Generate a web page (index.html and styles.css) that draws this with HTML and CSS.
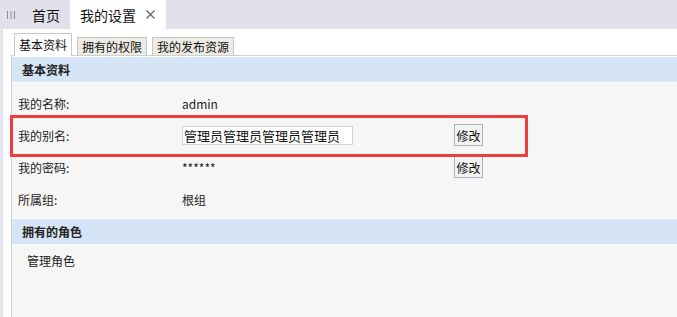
FILE: index.html
```html
<!DOCTYPE html>
<html lang="zh-CN">
<head>
  <meta charset="UTF-8" />
  <title>我的设置</title>
  <link rel="stylesheet" href="styles.css">
</head>
<body>
  <!-- Top tab bar -->
  <div class="topbar">
    <div class="handle">
      <svg width="10" height="8" viewBox="0 0 10 8">
        <path d="M1.5 0V8M5 0V8M8.5 0V8" stroke="#8a8a96" stroke-width="1" />
      </svg>
    </div>
    <div class="page-tab">首页</div>
    <div class="page-tab active">
      <span>我的设置</span>
      <svg class="close" width="9" height="9" viewBox="0 0 9 9">
        <path d="M0.5 0.5L8.5 8.5M8.5 0.5L0.5 8.5" stroke="#666" stroke-width="1.3" />
      </svg>
    </div>
  </div>

  <div class="main">
    <div class="gutter"></div>
    <div class="panel">
      <!-- Inner tabs -->
      <div class="sub-tabs">
        <div class="sub-tab selected">基本资料</div>
        <div class="sub-tab">拥有的权限</div>
        <div class="sub-tab">我的发布资源</div>
      </div>

      <div class="content">
        <div class="section-head">基本资料</div>
        <div class="rows">
          <div class="row">
            <div class="label">我的名称:</div>
            <div class="value">admin</div>
          </div>
          <div class="row">
            <div class="label">我的别名:</div>
            <div class="value"><input class="text-input" type="text" value="管理员管理员管理员管理员"></div>
            <button class="btn">修改</button>
          </div>
          <div class="row">
            <div class="label">我的密码:</div>
            <div class="value">******</div>
            <button class="btn">修改</button>
          </div>
          <div class="row">
            <div class="label">所属组:</div>
            <div class="value">根组</div>
          </div>
        </div>

        <div class="section-head">拥有的角色</div>
        <div class="roles">
          <div class="role">管理角色</div>
        </div>
      </div>
    </div>
  </div>

  <!-- Highlight annotation -->
  <div class="highlight"></div>
</body>
</html>
```

FILE: styles.css
```css
:root {
  --bar-bg: #e1e0eb;
  --panel-bg: #f6f6f6;
  --head-bg: #d5e5f5;
  --text: #222;
  --line: #d2cec9;
}

html, body {
  margin: 0;
  height: 100%;
}

body {
  font-family: "Noto Sans CJK SC", "Noto Sans", sans-serif;
  font-size: 12px;
  color: var(--text);
  background: var(--bar-bg);
  overflow: hidden;
  display: flex;
  flex-direction: column;
}

/* Top tab bar */
.topbar {
  height: 29px;
  flex: none;
  display: flex;
  align-items: stretch;
  background: var(--bar-bg);
}

.handle {
  width: 20px;
  display: flex;
  align-items: center;
  padding-left: 6px;
  box-sizing: border-box;
}

.page-tab {
  display: flex;
  align-items: center;
  padding: 0 10px 0 12px;
  font-size: 14px;
  color: #111;
}

.page-tab.active {
  background: #fff;
  padding: 0 11px 0 10px;
  gap: 10px;
}

/* Main area */
.main {
  flex: 1;
  display: flex;
  min-height: 0;
}

.gutter {
  width: 3px;
  flex: none;
  border-left: 1px solid #ecebf2;
  box-sizing: border-box;
}

.panel {
  flex: 1;
  background: #fff;
  padding-left: 8px;
  display: flex;
  flex-direction: column;
}

/* Inner tabs */
.sub-tabs {
  height: 26px;
  flex: none;
  display: flex;
  align-items: flex-end;
  padding-left: 3px;
}

.sub-tab {
  height: 18px;
  line-height: 17px;
  padding: 0 4px;
  margin-right: 5px;
  border: 1px solid #c9c9c2;
  border-bottom: none;
  background: #ecece5;
  box-sizing: border-box;
  color: #111;
}

.sub-tab.selected {
  height: 23px;
  line-height: 22px;
  margin-bottom: -1px;
  background: #fff;
  position: relative;
  z-index: 1;
}

/* Content */
.content {
  flex: 1;
  border-top: 1px solid var(--line);
  border-left: 1px solid #d0d0d6;
  background: var(--panel-bg);
}

.section-head {
  height: 25px;
  line-height: 25px;
  padding-left: 10px;
  background: var(--head-bg);
  border-top: 1px solid #fff;
  border-bottom: 1px solid #fff;
  font-weight: bold;
}

.rows {
  padding: 4px 0 3px 6px;
}

.row {
  height: 32px;
  display: flex;
  align-items: center;
}

.label {
  width: 164px;
  flex: none;
}

.value {
  width: 272px;
  flex: none;
}

.text-input {
  width: 171px;
  height: 19px;
  box-sizing: border-box;
  border: 1px solid #d3d3d3;
  background: #fff;
  padding: 0 0 0 1px;
  margin: 1px 0 0;
  font-family: inherit;
  font-size: 13px;
  color: #111;
  outline: none;
}

.btn {
  width: 29px;
  height: 22px;
  padding: 0;
  border: 1px solid #a9b1bc;
  background: #f3f3f3;
  font-family: inherit;
  font-size: 12px;
  color: #111;
}

.roles {
  padding: 0 0 0 15px;
}

.role {
  height: 32px;
  line-height: 32px;
}

/* Red annotation box drawn over the alias row */
.highlight {
  position: absolute;
  left: 10px;
  top: 115px;
  width: 518px;
  height: 42px;
  box-sizing: border-box;
  border: 3px solid #ef3d3d;
}
```
